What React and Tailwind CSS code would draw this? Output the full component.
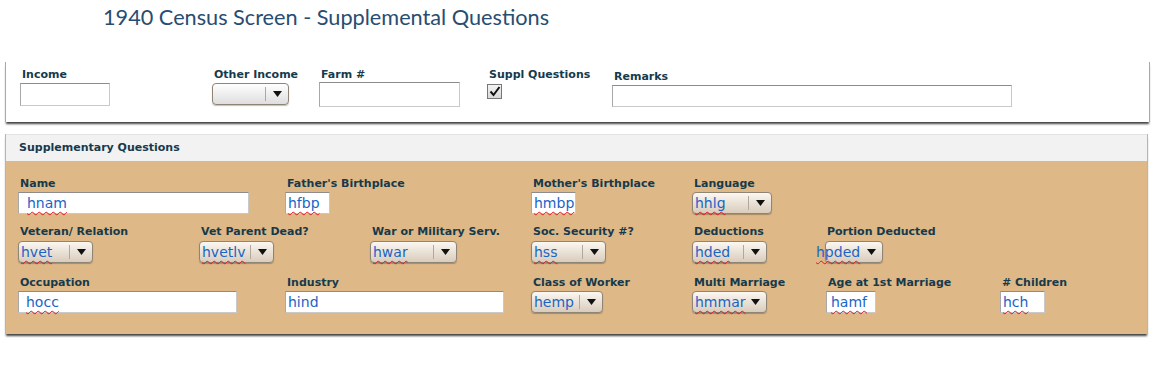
import React from 'react'

const label = 'text-[11px] leading-[14px] font-bold text-[#163a4c] whitespace-nowrap pl-[2px]'
const value = 'text-[14px] leading-[18px] text-[#1a64c6] whitespace-nowrap'
const spell = 'underline decoration-wavy decoration-[#e0161e] decoration-1 underline-offset-[3px]'

function Tri() {
  return (
    <svg width="9" height="6" viewBox="0 0 9 6"><polygon points="0,0 9,0 4.5,6" fill="#111" /></svg>
  )
}

function Input({ w, val, spellcheck = true, pad = 'pl-[3px]', h = 'h-[22px]' }) {
  return (
    <div className={`${w} ${h} ${pad} bg-white border border-[#c9c9c9] border-t-[#8c8c8c] border-l-[#a8a8a8] flex items-center`}>
      {val && <span className={`${value} ${spellcheck ? spell : ''}`}>{val}</span>}
    </div>
  )
}

function Select({ w, val, spellcheck = true, divider = true, shift = false, plain = false }) {
  const bg = plain
    ? 'bg-gradient-to-b from-white to-[#dedede]'
    : 'bg-gradient-to-b from-[#fbf7f2] to-[#d9ccbb]'
  return (
    <div className={`${w} h-[22px] rounded-[4px] border border-[#8e8577] ${bg} flex items-center shadow-[0_1px_1px_rgba(0,0,0,0.25)]`}>
      <div className={`flex-1 pl-[2px] ${shift ? '-ml-[12px]' : ''}`}>
        {val && <span className={`${value} ${spellcheck ? spell : ''}`}>{val}</span>}
      </div>
      {divider && <div className="w-px h-[14px] bg-[#b0a89c]" />}
      <div className="w-[22px] flex justify-center"><Tri /></div>
    </div>
  )
}

function Field({ w, name, children, gap = 'mb-[1px]' }) {
  return (
    <div className={`${w} flex flex-col items-start`}>
      <div className={`${label} ${gap}`}>{name}</div>
      {children}
    </div>
  )
}

export default function App() {
  return (
    <div className="w-[1160px] h-[370px] bg-white overflow-hidden" style={{ fontFamily: '"DejaVu Sans", Verdana, sans-serif' }}>
      <div className="pl-[103px] pt-[3px] h-[62px]">
        <h1 className="text-[21.7px] leading-[28px] text-[#274d72]" style={{ fontFamily: 'Lato, "Open Sans", sans-serif' }}>
          1940 Census Screen - Supplemental Questions
        </h1>
      </div>

      <div className="ml-[5px] w-[1145px] h-[60px] bg-white border-l border-r border-[#a9a9a9] shadow-[0_3px_2px_-1px_rgba(0,0,0,0.75)] flex pl-[14px] pt-[6px]">
        <Field w="w-[192px]" name="Income">
          <Input w="w-[90px]" h="h-[23px]" />
        </Field>
        <Field w="w-[107px]" name="Other Income">
          <Select w="w-[77px]" plain />
        </Field>
        <Field w="w-[168px]" name="Farm #" gap="mb-0">
          <Input w="w-[141px]" h="h-[25px]" />
        </Field>
        <Field w="w-[125px]" name="Suppl Questions" gap="mb-[2px]">
          <div className="w-[15px] h-[15px] border border-[#777] bg-gradient-to-b from-[#f4f4f4] to-[#d8d8d8] flex items-center justify-center">
            <svg width="12" height="11" viewBox="0 0 12 11"><path d="M1.5 5.5 L4.5 9 L10.5 1" stroke="#111" strokeWidth="2" fill="none" /></svg>
          </div>
        </Field>
        <div className="pt-[2px]">
          <Field w="w-[420px]" name="Remarks">
            <Input w="w-[400px]" />
          </Field>
        </div>
      </div>

      <div className="mt-[12px] ml-[5px] w-[1143px] border-l border-r border-[#b5b5b5] shadow-[0_3px_2px_-1px_rgba(0,0,0,0.75)]">
        <div className="h-[27px] bg-[#f2f2f2] border-t border-[#e4e4e4] flex items-center pl-[13px]">
          <span className="text-[11px] font-bold text-[#163a4c]">Supplementary Questions</span>
        </div>
        <div className="bg-[#deb887] pl-[12px] pt-[16px] pb-[21px]">
          <div className="flex">
            <Field w="w-[267px]" name="Name">
              <Input w="w-[231px]" val=" hnam" pad="pl-[8px]" />
            </Field>
            <Field w="w-[246px]" name="Father's Birthplace">
              <Input w="w-[45px]" val="hfbp" pad="pl-[2px]" />
            </Field>
            <Field w="w-[161px]" name="Mother's Birthplace">
              <Input w="w-[45px]" val="hmbp" pad="pl-[2px]" />
            </Field>
            <Field w="w-[133px]" name="Language">
              <Select w="w-[80px]" val="hhlg" />
            </Field>
          </div>

          <div className="flex mt-[11px]">
            <Field w="w-[181px]" name="Veteran/ Relation" gap="mb-[2px]">
              <Select w="w-[75px]" val="hvet" />
            </Field>
            <Field w="w-[171px]" name="Vet Parent Dead?" gap="mb-[2px]">
              <Select w="w-[75px]" val="hvetlv" />
            </Field>
            <Field w="w-[161px]" name="War or Military Serv." gap="mb-[2px]">
              <Select w="w-[87px]" val="hwar" />
            </Field>
            <Field w="w-[161px]" name="Soc. Security #?" gap="mb-[2px]">
              <Select w="w-[75px]" val="hss" />
            </Field>
            <Field w="w-[133px]" name="Deductions" gap="mb-[2px]">
              <Select w="w-[75px]" val="hded" />
            </Field>
            <Field w="w-[174px]" name="Portion Deducted" gap="mb-[2px]">
              <Select w="w-[58px]" val="hpded" divider={false} shift />
            </Field>
          </div>

          <div className="flex mt-[13px]">
            <Field w="w-[267px]" name="Occupation">
              <Input w="w-[219px]" val=" hocc" pad="pl-[7px]" />
            </Field>
            <Field w="w-[246px]" name="Industry">
              <Input w="w-[219px]" val="hind" spellcheck={false} pad="pl-[2px]" />
            </Field>
            <Field w="w-[161px]" name="Class of Worker">
              <Select w="w-[72px]" val="hemp" spellcheck={false} />
            </Field>
            <Field w="w-[134px]" name="Multi Marriage">
              <Select w="w-[75px]" val="hmmar" divider={false} />
            </Field>
            <Field w="w-[174px]" name="Age at 1st Marriage">
              <Input w="w-[50px]" val="hamf" pad="pl-[4px]" />
            </Field>
            <Field w="w-[60px]" name="# Children">
              <Input w="w-[45px]" val="hch" pad="pl-[2px]" />
            </Field>
          </div>
        </div>
      </div>
    </div>
  )
}
